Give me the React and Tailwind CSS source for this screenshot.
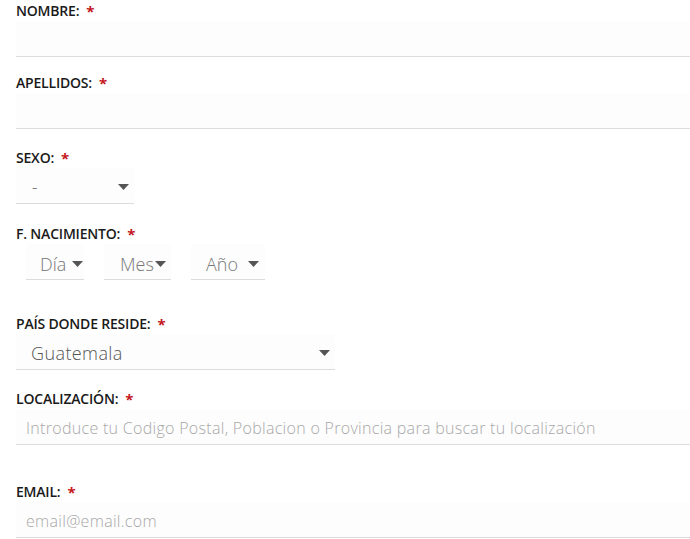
import React from "react";

const font = { fontFamily: "'Open Sans', Lato, 'Noto Sans', sans-serif" };

function Label({ children }) {
  return (
    <div className="h-5 flex items-center text-[14px] leading-5 font-[550] text-[#1a1a1a] uppercase tracking-[-0.2px]">
      {children}:
      <span className="ml-[7px] text-[#c4161c] text-[15px] font-bold">*</span>
    </div>
  );
}

function Caret() {
  return (
    <svg width="11" height="6" viewBox="0 0 11 6" className="shrink-0">
      <path d="M0 0 H11 L5.5 6 Z" fill="#555" />
    </svg>
  );
}

function FakeSelect({ value, className, textClass }) {
  return (
    <div
      className={
        "h-9 flex items-center justify-between bg-[#fdfdfd] border-b border-[#dcdcdc] " +
        className
      }
    >
      <span className={textClass}>{value}</span>
      <Caret />
    </div>
  );
}

function TextInput({ placeholder }) {
  return (
    <input
      type="text"
      placeholder={placeholder}
      className="block w-full h-9 bg-[#fdfdfd] border-b border-[#dcdcdc] pl-[10px] pt-[2px] text-[16px] tracking-[0.3px] font-light text-[#555] placeholder:text-[#a8a8a8] outline-none"
      style={font}
    />
  );
}

export default function App() {
  return (
    <div className="min-h-[539px] bg-white pl-4 overflow-hidden" style={font}>
      <div className="pt-[1px]">
        <Label>Nombre</Label>
        <TextInput />
      </div>

      <div className="mt-4">
        <Label>Apellidos</Label>
        <TextInput />
      </div>

      <div className="mt-[19px]">
        <Label>Sexo</Label>
        <FakeSelect
          value="-"
          className="w-[118px] pl-4 pr-[5px] pt-[2px]"
          textClass="text-[17px] text-[#666] font-light"
        />
      </div>

      <div className="mt-5">
        <Label>F. Nacimiento</Label>
        <div className="flex gap-5 pl-[10px]">
          <FakeSelect
            value="Día"
            className="w-[58px] pl-[14px] pr-[1px] pt-[5px]"
            textClass="text-[18px] text-[#777] font-light"
          />
          <FakeSelect
            value="Mes"
            className="w-[67px] pl-4 pr-[5px] pt-[5px]"
            textClass="text-[18px] text-[#777] font-light"
          />
          <FakeSelect
            value="Año"
            className="w-[74px] pl-[15px] pr-[6px] pt-[5px]"
            textClass="text-[18px] text-[#777] font-light"
          />
        </div>
      </div>

      <div className="mt-[34px]">
        <Label>País donde reside</Label>
        <FakeSelect
          value="Guatemala"
          className="w-[319px] pl-[15px] pr-[5px] pt-[3px]"
          textClass="text-[18px] tracking-[0.4px] text-[#555] font-light"
        />
      </div>

      <div className="mt-[19px]">
        <Label>Localización</Label>
        <TextInput placeholder="Introduce tu Codigo Postal, Poblacion o Provincia para buscar tu localización" />
      </div>

      <div className="mt-[37px]">
        <Label>Email</Label>
        <TextInput placeholder="email@email.com" />
      </div>
    </div>
  );
}
